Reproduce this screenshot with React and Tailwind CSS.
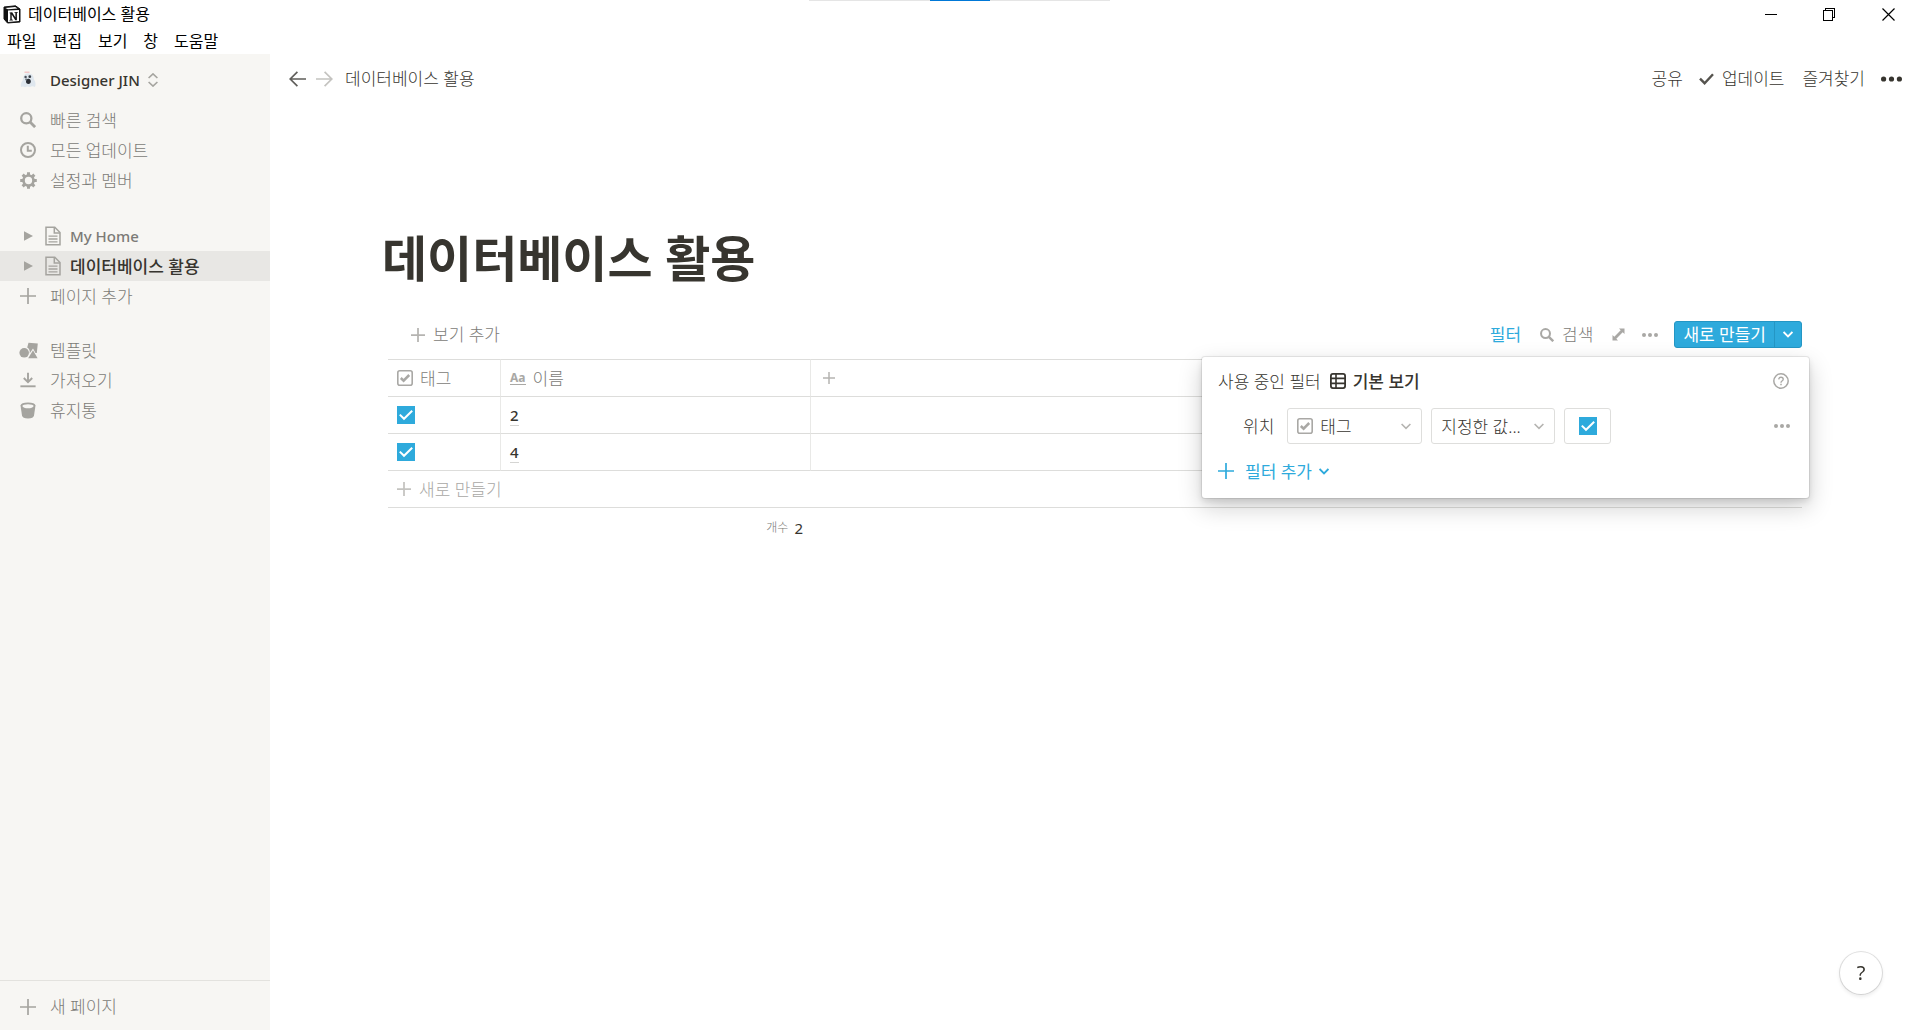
import React from "react";

const FONT = "font-['Noto_Sans','Noto_Sans_CJK_KR',sans-serif]";

/* ---------- icons ---------- */

function NotionLogo() {
  return (
    <svg width="18" height="19" viewBox="0 0 18 19" aria-hidden="true">
      <path d="M1 2 L12.5 .8 L17 4 V17 L4.5 18 L1 14 Z" fill="#111" stroke="#111" strokeLinejoin="round" />
      <path d="M2.3 2.9 L12.2 2 L14.6 3.6 L5 4.3 Z" fill="#fff" />
      <path d="M5 5.6 L16 4.9 V16.1 L5 16.9 Z" fill="#fff" />
      <path d="M6.6 7.5 L9.2 7.3 L12.4 12.4 V8 L11.3 7.8 V7.2 L14.8 7 V7.6 L13.9 7.9 V15.2 L12.3 15.3 L8.7 9.6 V14.6 L9.9 14.8 V15.4 L6.4 15.6 V15 L7.3 14.7 V8.4 L6.6 8.2 Z" fill="#111" />
    </svg>
  );
}

function Ghost() {
  return (
    <svg width="18" height="18" viewBox="0 0 18 18" aria-hidden="true">
      <path d="M2 16 Q1 13 3.6 9.5 Q4 2.5 9 2.2 Q14.5 2.3 15 8.5 Q17.5 12 16 16 Q13 14.6 11 16 Q8 15 6 16.3 Q4 14.8 2 16Z" fill="#dfe7ee" />
      <path d="M5.5 1.2 H10.5" stroke="#f1bcbc" strokeWidth="1.2" />
      <circle cx="6.6" cy="6" r="1.2" fill="#4a5058" />
      <circle cx="10.8" cy="5.7" r="1.4" fill="#3b4047" />
      <ellipse cx="9.4" cy="10.3" rx="2.4" ry="2.6" fill="#2c3036" />
      <circle cx="7.2" cy="8.4" r="1" fill="#6a7078" />
    </svg>
  );
}

function SearchIcon({ size = 16 }) {
  return (
    <svg width={size} height={size} viewBox="0 0 16 16" fill="none" stroke="currentColor" aria-hidden="true">
      <circle cx="6.3" cy="6.3" r="5.1" strokeWidth="2.3" />
      <path d="M9.8 9.8 L15.1 15.1" strokeWidth="2.8" />
    </svg>
  );
}

function ClockIcon() {
  return (
    <svg width="16" height="16" viewBox="0 0 16 16" fill="none" stroke="currentColor" aria-hidden="true">
      <circle cx="8" cy="8" r="7" strokeWidth="2" />
      <path d="M7.8 3.8 V8.8 H11.8" strokeWidth="2" />
    </svg>
  );
}

function GearIcon() {
  return (
    <svg width="17" height="17" viewBox="0 0 16 16" aria-hidden="true">
      <g stroke="currentColor" strokeWidth="2.8">
        <path d="M8 .2 V3.5 M8 12.5 V15.8 M.2 8 H3.5 M12.5 8 H15.8 M2.5 2.5 L4.8 4.8 M11.2 11.2 L13.5 13.5 M2.5 13.5 L4.8 11.2 M11.2 4.8 L13.5 2.5" />
      </g>
      <circle cx="8" cy="8" r="4.7" fill="none" stroke="currentColor" strokeWidth="2.5" />
    </svg>
  );
}

function PageIcon() {
  return (
    <svg width="16" height="20" viewBox="0 0 16 20" fill="none" stroke="currentColor" aria-hidden="true">
      <path d="M1 1.2 H9.8 L15 6.5 V18.8 H1 Z" strokeWidth="1.5" />
      <path d="M9.3 1.2 V7 H15" strokeWidth="1.5" />
      <path d="M3.5 10.2 H12.5 M3.5 13 H12.5 M3.5 15.8 H12.5" strokeWidth="1.3" />
    </svg>
  );
}

function Plus({ size = 16, width = 1.7 }) {
  return (
    <svg width={size} height={size} viewBox="0 0 16 16" fill="none" stroke="currentColor" strokeWidth={width} aria-hidden="true">
      <path d="M8 0 V16 M0 8 H16" />
    </svg>
  );
}

function TemplatesIcon() {
  return (
    <svg width="19" height="17" viewBox="0 0 19 17" fill="currentColor" aria-hidden="true">
      <path d="M9.5 .8 L18.8 1.6 L17.8 11 L16.5 10.9 L14 6.5 L10.6 11.5 Q11.4 7.2 8.2 5.4 Z" />
      <circle cx="5.2" cy="10.8" r="4.8" />
      <path d="M14 8.3 L18.6 16.2 H9.2 Z" />
    </svg>
  );
}

function ImportIcon() {
  return (
    <svg width="16" height="16" viewBox="0 0 16 16" fill="none" stroke="currentColor" aria-hidden="true">
      <path d="M8 .8 V9.5 M3.8 6 L8 10.2 L12.2 6" strokeWidth="1.9" />
      <path d="M.4 14.3 H15.6" strokeWidth="1.9" />
    </svg>
  );
}

function TrashIcon() {
  return (
    <svg width="16" height="17" viewBox="0 0 16 17" aria-hidden="true">
      <path d="M.5 3.6 Q1 .6 8 .6 Q15 .6 15.5 3.6 L14 13.6 Q13.5 16.6 8 16.6 Q2.5 16.6 2 13.6 Z" fill="currentColor" />
      <path d="M2.3 4 Q3 2.2 8 2.2 Q13 2.2 13.7 4 Q12.6 6.3 8 6.3 Q3.4 6.3 2.3 4Z" fill="#f7f6f3" />
    </svg>
  );
}

function Arrow({ flip }) {
  return (
    <svg width="17" height="16" viewBox="0 0 17 16" fill="none" stroke="currentColor" strokeWidth="1.7" aria-hidden="true">
      {flip ? <path d="M0 8 H15.5 M8.6 .8 L15.8 8 L8.6 15.2" /> : <path d="M17 8 H1.5 M8.4 .8 L1.2 8 L8.4 15.2" />}
    </svg>
  );
}

function Dots({ width = 16, r = 2 }) {
  return (
    <svg width={width} height="8" viewBox={`0 0 ${width} 8`} fill="currentColor" aria-hidden="true">
      <circle cx={r} cy="4" r={r} />
      <circle cx={width / 2} cy="4" r={r} />
      <circle cx={width - r} cy="4" r={r} />
    </svg>
  );
}

function ChevronDown({ width = 1.6 }) {
  return (
    <svg width="10" height="7" viewBox="0 0 10 7" fill="none" stroke="currentColor" strokeWidth={width} aria-hidden="true">
      <path d="M.6 1 L5 5.4 L9.4 1" />
    </svg>
  );
}

function CheckPropIcon() {
  return (
    <svg width="16" height="16" viewBox="0 0 16 16" fill="none" stroke="currentColor" aria-hidden="true">
      <rect x=".8" y=".8" width="14.4" height="14.4" rx="2" strokeWidth="1.6" />
      <path d="M3.8 8 L6.6 10.7 L12.2 5" strokeWidth="2.5" />
    </svg>
  );
}

function TableIcon() {
  return (
    <svg width="16" height="16" viewBox="0 0 16 16" fill="none" stroke="currentColor" aria-hidden="true">
      <rect x=".9" y=".9" width="14.2" height="14.2" rx="2" strokeWidth="1.8" />
      <path d="M1 5.4 H15 M1 10.4 H15 M6 1 V15" strokeWidth="1.6" />
    </svg>
  );
}

/* ---------- shared pieces ---------- */

function SideRow({ icon, children }) {
  return (
    <button type="button" className="flex h-[30px] w-full items-center gap-3 pl-[18px] text-left">
      <span className="flex w-5 shrink-0 justify-center text-[#a5a49f]">{icon}</span>
      <span className="text-[#7c7b77]">{children}</span>
    </button>
  );
}

function PageRow({ children, active }) {
  return (
    <button
      type="button"
      className={`flex h-[30px] w-full items-center pl-6 text-left ${active ? "bg-[#e8e7e4]" : ""}`}
    >
      <svg width="9" height="10" viewBox="0 0 9 10" className="mr-3 text-[#a5a49f]" aria-hidden="true">
        <path d="M0 .2 L9 5 L0 9.8Z" fill="currentColor" />
      </svg>
      <span className="mr-[9px] text-[#a5a49f]"><PageIcon /></span>
      <span className={active ? "font-medium text-[#37352f]" : "text-[15px] font-medium text-[#7c7b77]"}>{children}</span>
    </button>
  );
}

function BlueCheckbox({ label }) {
  return (
    <label className="relative block size-[18px]">
      <input
        type="checkbox"
        defaultChecked
        aria-label={label}
        className="peer block size-[18px] appearance-none border border-[#37352f] checked:border-[#2eaadc] checked:bg-[#2eaadc]"
      />
      <svg width="18" height="18" viewBox="0 0 18 18" className="pointer-events-none absolute inset-0 hidden peer-checked:block" fill="none" stroke="#fff" strokeWidth="2" aria-hidden="true">
        <path d="M2.8 8.6 L7 12.8 L15.2 4.8" />
      </svg>
    </label>
  );
}

/* ---------- regions ---------- */

function WindowChrome() {
  return (
    <header className="relative h-[54px] shrink-0 text-base text-black">
      <div className="absolute top-0 left-1/2 flex h-px w-[301px] -translate-x-[151px] justify-center bg-[#e5e5e5]">
        <span className="w-[60px] bg-[#0078d7]" />
      </div>
      <div className="flex h-7 items-center justify-between pr-6 pl-[3px]">
        <div className="flex items-center gap-[7px]">
          <NotionLogo />
          <span className="leading-none">데이터베이스 활용</span>
        </div>
        <div className="flex items-center gap-[45px]">
          <button type="button" aria-label="최소화">
            <svg width="13" height="13" viewBox="0 0 13 13" shapeRendering="crispEdges"><path d="M0 6.5 H12" stroke="#000" /></svg>
          </button>
          <button type="button" aria-label="이전 크기로">
            <svg width="13" height="13" viewBox="0 0 13 13" fill="none" stroke="#000" shapeRendering="crispEdges">
              <path d="M.5 2.5 H9.5 V12.5 H.5Z M2.5 2.5 V.5 H11.5 V9.5 H9.5" />
            </svg>
          </button>
          <button type="button" aria-label="닫기" className="px-px">
            <svg width="13" height="13" viewBox="0 0 13 13" stroke="#000" strokeWidth="1.2"><path d="M.5 .5 L12.5 12.5 M12.5 .5 L.5 12.5" /></svg>
          </button>
        </div>
      </div>
      <nav className="flex h-[26px] items-center gap-4 pl-[7px]">
        {["파일", "편집", "보기", "창", "도움말"].map((m) => (
          <button key={m} type="button" className="leading-none">{m}</button>
        ))}
      </nav>
    </header>
  );
}

function Sidebar() {
  return (
    <aside className="flex w-[270px] shrink-0 flex-col bg-[#f7f6f3] text-[17px] leading-none font-light">
      <button type="button" className="flex h-[51px] items-center gap-3 pt-px pl-[18px]">
        <span className="flex w-5 justify-center"><Ghost /></span>
        <span className="text-[15px] leading-none font-medium text-[#37352f]">Designer JIN</span>
        <svg width="10" height="14" viewBox="0 0 10 14" fill="none" stroke="#a5a49f" strokeWidth="1.6" className="-ml-1" aria-hidden="true">
          <path d="M.6 5 L5 .9 L9.4 5 M.6 9 L5 13.1 L9.4 9" />
        </svg>
      </button>
      <div>
        <SideRow icon={<SearchIcon />}>빠른 검색</SideRow>
        <SideRow icon={<ClockIcon />}>모든 업데이트</SideRow>
        <SideRow icon={<GearIcon />}>설정과 멤버</SideRow>
      </div>
      <div className="mt-[26px]">
        <PageRow>My Home</PageRow>
        <PageRow active>데이터베이스 활용</PageRow>
        <SideRow icon={<Plus />}>페이지 추가</SideRow>
      </div>
      <div className="mt-6">
        <SideRow icon={<TemplatesIcon />}>템플릿</SideRow>
        <SideRow icon={<ImportIcon />}>가져오기</SideRow>
        <SideRow icon={<TrashIcon />}>휴지통</SideRow>
      </div>
      <div className="mt-auto flex h-[50px] items-center border-t border-[#e3e2de] pt-0.5">
        <SideRow icon={<Plus />}>새 페이지</SideRow>
      </div>
    </aside>
  );
}

function TopBar() {
  return (
    <div className="flex h-[50px] items-center justify-between pr-[18px] pb-px pl-[19px] font-light text-[#37352f]">
      <div className="flex items-center">
        <button type="button" aria-label="뒤로" className="text-[#5f5e5a]"><Arrow /></button>
        <button type="button" aria-label="앞으로" className="ml-2.5 text-[#c4c3c0]"><Arrow flip /></button>
        <a href="#page" className="ml-3">데이터베이스 활용</a>
      </div>
      <div className="flex items-center">
        <button type="button">공유</button>
        <button type="button" className="ml-4 flex items-center gap-2">
          <svg width="15" height="12" viewBox="0 0 15 12" fill="none" stroke="#55534e" strokeWidth="2.4" aria-hidden="true">
            <path d="M1 5.6 L5.6 10.2 L14 1.2" />
          </svg>
          업데이트
        </button>
        <button type="button" className="ml-[18px]">즐겨찾기</button>
        <button type="button" aria-label="더 보기" className="ml-4"><Dots width={21} r={2.6} /></button>
      </div>
    </div>
  );
}

function Toolbar() {
  return (
    <div className="flex h-[27px] items-center justify-between pl-[23px] font-light text-[#7c7b77]">
      <button type="button" className="flex items-center gap-2">
        <span className="text-[#b5b4b1]"><Plus size={14} width={2} /></span>
        보기 추가
      </button>
      <div className="flex items-center">
        <button type="button" className="font-normal text-[#2eaadc]">필터</button>
        <button type="button" className="ml-[19px] flex items-center gap-2">
          <span className="text-[#a9a8a5]"><SearchIcon size={14} /></span>
          검색
        </button>
        <button type="button" aria-label="전체 화면" className="ml-[19px] text-[#a9a8a5]">
          <svg width="13" height="13" viewBox="0 0 13 13" fill="currentColor" aria-hidden="true">
            <path d="M7 .5 H12.5 V6 L10.7 4.3 L4.3 10.7 L6 12.5 H.5 V7 L2.3 8.7 L8.7 2.3 Z" />
          </svg>
        </button>
        <button type="button" aria-label="옵션" className="ml-[17px] text-[#a9a8a5]"><Dots /></button>
        <div className="ml-4 flex h-[27px] overflow-hidden rounded-[3px] border border-[#2496c4] bg-[#2eaadc] text-white">
          <button type="button" className="px-2 font-normal">새로 만들기</button>
          <button type="button" aria-label="새로 만들기 옵션" className="flex w-[27px] items-center justify-center border-l border-[#2496c4]"><ChevronDown width={1.8} /></button>
        </div>
      </div>
    </div>
  );
}

function DataTable() {
  const head = "border-r border-[#e9e9e7] text-left font-light text-[#7c7b77]";
  return (
    <table className="w-full table-fixed border-separate border-spacing-0 font-light">
      <colgroup>
        <col className="w-[113px]" />
        <col className="w-[310px]" />
        <col />
      </colgroup>
      <thead>
        <tr className="h-[38px]">
          <th className={`border-y border-y-[#dddddb] pl-[9px] ${head}`}>
            <span className="flex items-center gap-[7px]"><span className="text-[#a9a8a5]"><CheckPropIcon /></span>태그</span>
          </th>
          <th className={`border-y border-y-[#dddddb] pl-[9px] ${head}`}>
            <span className="flex items-center gap-[7px]">
              <span className="border-b border-[#a9a8a5] text-xs leading-[13px] font-bold text-[#a9a8a5]">Aa</span>이름
            </span>
          </th>
          <th className="border-y border-[#dddddb] pl-3 text-left text-[#b5b4b1]">
            <button type="button" aria-label="속성 추가" className="block"><Plus size={12} width={2} /></button>
          </th>
        </tr>
      </thead>
      <tbody>
        {["2", "4"].map((n) => (
          <tr key={n} className="h-[37px]">
            <td className="border-r border-b border-r-[#e9e9e7] border-b-[#dddddb] pl-[9px]"><BlueCheckbox label={`태그 ${n}`} /></td>
            <td className="border-r border-b border-r-[#e9e9e7] border-b-[#dddddb] pl-[9px] text-[15px] leading-none font-medium text-[#37352f]">
              <a href="#row" className="border-b border-[#d5d5d3]">{n}</a>
            </td>
            <td className="border-b border-[#dddddb]" />
          </tr>
        ))}
        <tr className="h-[37px]">
          <td colSpan={3} className="border-b border-[#dddddb] pl-[9px]">
            <button type="button" className="flex items-center gap-2 text-[#a9a8a5]">
              <span className="text-[#c4c3c0]"><Plus size={14} width={2} /></span>새로 만들기
            </button>
          </td>
        </tr>
      </tbody>
      <tfoot>
        <tr className="h-10">
          <td colSpan={2} className="pr-2">
            <span className="flex items-center justify-end gap-1.5">
              <span className="text-xs text-[#7c7b77]">개수</span>
              <span className="text-[15px] leading-none font-normal text-[#37352f]">2</span>
            </span>
          </td>
          <td />
        </tr>
      </tfoot>
    </table>
  );
}

function FilterSelect({ label, value, icon, className, pad }) {
  return (
    <label className={`relative flex h-9 items-center rounded-[3px] border border-[#dededc] ${className}`}>
      {icon && <span className="pointer-events-none absolute left-[9px] text-[#a9a8a5]">{icon}</span>}
      <select aria-label={label} className={`h-full w-full appearance-none bg-transparent ${pad}`}>
        <option>{value}</option>
      </select>
      <span className="pointer-events-none absolute right-[10px] text-[#b5b4b1]"><ChevronDown /></span>
    </label>
  );
}

function FilterPopover() {
  return (
    <section className="absolute top-9 -right-[7px] h-[141px] w-[607px] rounded-[3px] bg-white px-4 font-light text-[#37352f] shadow-[0_0_0_1px_rgba(15,15,15,0.08),0_3px_6px_rgba(15,15,15,0.12),0_9px_24px_rgba(15,15,15,0.2)]">
      <div className="flex h-12 items-center">
        <span>사용 중인 필터</span>
        <span className="mr-[7px] ml-[9px]"><TableIcon /></span>
        <span className="font-medium">기본 보기</span>
        <button type="button" aria-label="도움말" className="mr-1 ml-auto text-[#a9a8a5]">
          <svg width="16" height="16" viewBox="0 0 16 16" fill="none" stroke="currentColor" aria-hidden="true">
            <circle cx="8" cy="8" r="7.2" strokeWidth="1.5" />
            <path d="M5.7 6.4 Q5.8 4.3 8 4.3 Q10.2 4.3 10.2 6.2 Q10.2 7.3 9 8 Q8 8.7 8 9.8" strokeWidth="1.4" />
            <path d="M8 10.8 V12.3" strokeWidth="1.5" />
          </svg>
        </button>
      </div>
      <div className="mt-[3px] flex h-9 items-center">
        <span className="mr-[13px] ml-[25px]">위치</span>
        <FilterSelect label="속성" value="태그" icon={<CheckPropIcon />} className="w-[135px]" pad="pl-8" />
        <FilterSelect label="조건" value="지정한 값..." className="ml-[9px] w-[124px]" pad="pl-[9px]" />
        <div className="ml-[9px] flex h-9 w-[47px] items-center justify-center rounded-[3px] border border-[#dededc]">
          <BlueCheckbox label="값" />
        </div>
        <button type="button" aria-label="필터 옵션" className="mr-[3px] ml-auto text-[#a9a8a5]"><Dots /></button>
      </div>
      <button type="button" className="mt-3 flex h-[30px] items-center font-normal text-[#2eaadc]">
        <Plus />
        <span className="mr-[7px] ml-[11px]">필터 추가</span>
        <ChevronDown width={1.8} />
      </button>
    </section>
  );
}

export default function App() {
  return (
    <div className={`flex min-h-screen flex-col overflow-hidden bg-white ${FONT}`}>
      <WindowChrome />
      <div className="flex flex-1">
        <Sidebar />
        <main className="flex min-w-0 flex-1 flex-col text-[17px] leading-none">
          <TopBar />
          <div className="px-28 pt-[124px]">
            <h1 className="text-[49px] leading-[60px] font-bold text-[#37352f]">데이터베이스 활용</h1>
            <div className="relative mx-1.5 mt-[33px]">
              <Toolbar />
              <FilterPopover />
              <div className="mt-[11px]"><DataTable /></div>
            </div>
          </div>
        </main>
      </div>
      <button
        type="button"
        aria-label="도움말 및 지원"
        className="fixed right-[38px] bottom-9 size-[42px] rounded-full bg-white text-xl leading-none font-normal text-[#37352f] shadow-[0_0_0_1px_rgba(15,15,15,0.12),0_2px_4px_rgba(15,15,15,0.1)]"
      >
        ?
      </button>
    </div>
  );
}
